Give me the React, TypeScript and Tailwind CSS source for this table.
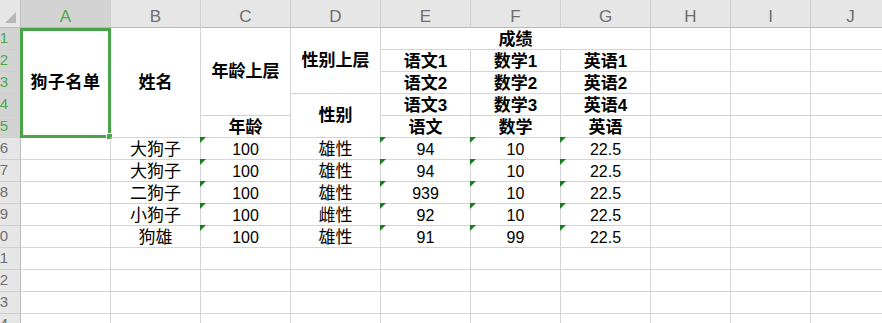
import type { ReactNode } from "react";

const FONT = '"Liberation Sans", Arial, "Noto Sans CJK SC", sans-serif';

const columns = ["A", "B", "C", "D", "E", "F", "G", "H", "I", "J"];

const dogs = [
  { name: "大狗子", age: "100", sex: "雄性", chinese: "94", math: "10", english: "22.5" },
  { name: "大狗子", age: "100", sex: "雄性", chinese: "94", math: "10", english: "22.5" },
  { name: "二狗子", age: "100", sex: "雄性", chinese: "939", math: "10", english: "22.5" },
  { name: "小狗子", age: "100", sex: "雌性", chinese: "92", math: "10", english: "22.5" },
  { name: "狗雄", age: "100", sex: "雄性", chinese: "91", math: "99", english: "22.5" },
];

// little green flag excel puts on numbers stored as text
function TextFlag() {
  return (
    <span className="absolute -left-px -top-px w-0 h-0 border-t-[6px] border-r-[6px] border-t-[#17801a] border-r-transparent" />
  );
}

function Cell({
  children,
  className = "",
  bold = false,
  flag = false,
}: {
  children?: ReactNode;
  className?: string;
  bold?: boolean;
  flag?: boolean;
}) {
  return (
    <div
      className={`relative flex justify-center items-center whitespace-nowrap border-r border-b border-[#d4d4d4] text-black ${
        bold ? "font-bold text-[17px]" : "text-[16px]"
      } ${className}`}
    >
      {flag && <TextFlag />}
      {children}
    </div>
  );
}

function RowHead({ n, active = false }: { n: number; active?: boolean }) {
  return (
    <div
      className={`flex items-center justify-end pr-[12px] overflow-hidden whitespace-nowrap text-[15px] border-r border-r-[#bdbdbd] border-b border-b-[#cfcfcf] ${
        active ? "bg-[#d3d3d3] text-[#4ea84e]" : "bg-[#e6e6e6] text-[#6e6e6e]"
      }`}
    >
      {n}
    </div>
  );
}

function Blanks({ count }: { count: number }) {
  return (
    <>
      {Array.from({ length: count }, (_, i) => (
        <Cell key={i} />
      ))}
    </>
  );
}

export default function App() {
  return (
    <div className="w-[882px] h-[323px] overflow-hidden bg-white" style={{ fontFamily: FONT }}>
      <div className="grid grid-cols-[21px_repeat(7,90px)_repeat(3,80px)] grid-rows-[28px_repeat(14,22px)]">
        {/* select-all corner */}
        <div className="relative bg-[#e6e6e6] border-r border-b border-[#bdbdbd]">
          <span className="absolute right-[4px] bottom-[4px] w-[11px] h-[11px] bg-[#b6b6b6] [clip-path:polygon(100%_0,100%_100%,0_100%)]" />
        </div>

        {/* column headers */}
        {columns.map((c, i) => (
          <div
            key={c}
            className={`flex items-center justify-center pt-[6px] text-[17px] border-r border-r-[#cfcfcf] border-b border-b-[#b9b9b9] ${
              i === 0 ? "bg-[#d3d3d3] text-[#4ea84e]" : "bg-[#e6e6e6] text-[#6e6e6e]"
            }`}
          >
            {c}
          </div>
        ))}

        {/* row 1 */}
        <RowHead n={1} active />
        <Cell bold className="row-span-5 tracking-[0.5px]">
          狗子名单
          <div className="absolute -left-px top-0 -right-px -bottom-px border-[3px] border-[#4aa54a] pointer-events-none">
            <span className="absolute -right-[5px] -bottom-[5px] w-[7px] h-[7px] bg-[#4aa54a] border border-white" />
          </div>
        </Cell>
        <Cell bold className="row-span-5">姓名</Cell>
        <Cell bold className="row-span-4">年龄上层</Cell>
        <Cell bold className="row-span-3">性别上层</Cell>
        <Cell bold className="col-span-3 pt-[3px]">成绩</Cell>
        <Blanks count={3} />

        {/* row 2 */}
        <RowHead n={2} active />
        <Cell bold className="pt-[3px]">语文1</Cell>
        <Cell bold className="pt-[3px]">数学1</Cell>
        <Cell bold className="pt-[3px]">英语1</Cell>
        <Blanks count={3} />

        {/* row 3 */}
        <RowHead n={3} active />
        <Cell bold className="pt-[3px]">语文2</Cell>
        <Cell bold className="pt-[3px]">数学2</Cell>
        <Cell bold className="pt-[3px]">英语2</Cell>
        <Blanks count={3} />

        {/* row 4 */}
        <RowHead n={4} active />
        <Cell bold className="row-span-2">性别</Cell>
        <Cell bold className="pt-[3px]">语文3</Cell>
        <Cell bold className="pt-[3px]">数学3</Cell>
        <Cell bold className="pt-[3px]">英语4</Cell>
        <Blanks count={3} />

        {/* row 5 */}
        <RowHead n={5} active />
        <Cell bold className="pt-[3px]">年龄</Cell>
        <Cell bold className="pt-[3px]">语文</Cell>
        <Cell bold className="pt-[3px]">数学</Cell>
        <Cell bold className="pt-[3px]">英语</Cell>
        <Blanks count={3} />

        {/* data rows */}
        {dogs.map((d, i) => (
          <div key={i} className="contents">
            <RowHead n={i + 6} />
            <Cell />
            <Cell className="pt-[3px] text-[17px]">{d.name}</Cell>
            <Cell className="pt-[3px]" flag>{d.age}</Cell>
            <Cell className="pt-[3px] text-[17px]">{d.sex}</Cell>
            <Cell className="pt-[3px]" flag>{d.chinese}</Cell>
            <Cell className="pt-[3px]" flag>{d.math}</Cell>
            <Cell className="pt-[3px]" flag>{d.english}</Cell>
            <Blanks count={3} />
          </div>
        ))}

        {/* empty rows */}
        {[11, 12, 13, 14].map((n) => (
          <div key={n} className="contents">
            <RowHead n={n} />
            <Blanks count={10} />
          </div>
        ))}
      </div>
    </div>
  );
}
